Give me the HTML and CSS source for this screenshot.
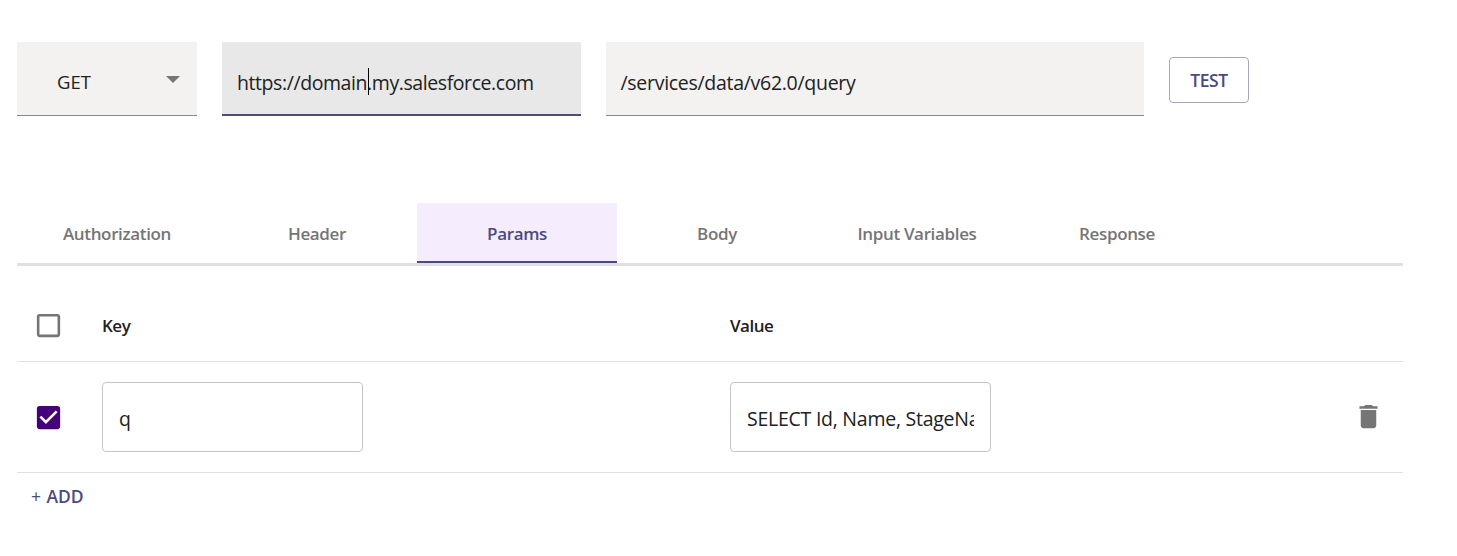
FILE: index.html
```html
<!DOCTYPE html>
<html lang="en">
<head>
<meta charset="utf-8">
<title>Request</title>
<link rel="stylesheet" href="styles.css">
</head>
<body>
<main class="page">
  <div class="request">
    <div class="field method"><span>GET</span><i class="arrow"></i></div>
    <div class="field host"><span>https://domain<i class="caret"></i>.my.salesforce.com</span></div>
    <div class="field path"><span>/services/data/v62.0/query</span></div>
    <button class="test"><span>TEST</span></button>
  </div>
  <nav class="tabs">
    <div class="tab"><span>Authorization</span></div>
    <div class="tab"><span>Header</span></div>
    <div class="tab active"><span>Params</span></div>
    <div class="tab"><span>Body</span></div>
    <div class="tab"><span>Input Variables</span></div>
    <div class="tab"><span>Response</span></div>
  </nav>
  <div class="row head">
    <svg class="check" viewBox="0 0 24 24"><path fill="#757575" d="M19 5v14H5V5h14m0-2H5c-1.100 0-2 .9-2 2v14c0 1.100.9 2 2 2h14c1.100 0 2-.9 2-2V5c0-1.100-.9-2-2-2z"/></svg>
    <div class="key"><span>Key</span></div>
    <div class="value"><span>Value</span></div>
  </div>
  <div class="row item">
    <svg class="check" viewBox="0 0 24 24"><path fill="#45007a" d="M19 3H5c-1.110 0-2 .9-2 2v14c0 1.100.89 2 2 2h14c1.110 0 2-.9 2-2V5c0-1.100-.89-2-2-2zm-9 14l-5-5 1.410-1.410L10 14.170l7.590-7.590L19 8l-9 9z"/></svg>
    <div class="key"><div class="box"><span>q</span></div></div>
    <div class="value"><div class="box"><span>SELECT Id, Name, StageName</span></div></div>
    <svg class="trash" viewBox="0 0 24 24"><path fill="#757575" d="M6 19c0 1.100.9 2 2 2h8c1.100 0 2-.9 2-2V7H6v12zM19 4h-3.500l-1-1h-5l-1 1H5v2h14V4z"/></svg>
  </div>
  <button class="add">+ <span>ADD</span></button>
</main>
</body>
</html>
```
FILE: styles.css
```css
* { box-sizing: border-box; }
body { margin: 0; background: #fff; color: #212121; font-family: "Open Sans", "Noto Sans", sans-serif; }
.page { width: 1403px; padding: 42px 0 0 17px; }
.request { display: flex; gap: 25px; height: 74px; }
.field { background: #f3f2f1; border-bottom: 1px solid #8a8a8a; padding: 8px 15px 0 14.5px; display: flex; align-items: center; font-size: 19.5px; letter-spacing: -0.29px; white-space: nowrap; }
.method { width: 180px; padding: 6px 17px 0 40px; justify-content: space-between; font-size: 18.5px; letter-spacing: 0; }
.arrow { border: 7px solid transparent; border-top-color: #757575; border-bottom: 0; margin-bottom: 5px; }
.host { width: 359px; padding: 8px 15px 0; background: #e8e8e8; border-bottom: 2px solid #4f4a80; letter-spacing: -0.42px; }
.caret { display: inline-block; width: 1px; height: 27px; margin: 0 -2px 0 1px; background: #000; vertical-align: -5px; }
.path { width: 538px; }
.test { width: 80px; height: 46px; margin-top: 15px; padding: 0; background: #fff; border: 1px solid #a9a6c0; border-radius: 4px; font: 600 17.5px "Open Sans", sans-serif; letter-spacing: -0.4px; color: #4b4a80; }
.tabs { display: flex; height: 63px; margin-top: 87px; border-bottom: 3px solid #e0e0e0; }
.tab { width: 200px; display: flex; align-items: center; justify-content: center; font-size: 17px; font-weight: 600; letter-spacing: -0.35px; color: #757575; }
.active { background: #f5ecfe; color: #4b4a80; border-bottom: 2px solid #4b4a80; padding-top: 2px; }
.row { display: grid; grid-template-columns: 85px 628px 1fr 50px; align-items: center; border-bottom: 1px solid #e0e0e0; }
.head { height: 96px; font-size: 17px; font-weight: 600; letter-spacing: -0.5px; padding-top: 24px; }
.item { height: 111px; }
.check { width: 31px; height: 31px; margin: 0 0 0 15.5px; }
.head .check { margin-bottom: 1px; position: relative; top: 0.5px; }
.trash { width: 31px; height: 31px; margin: 0 0 1px -0.5px; }
.box { width: 261px; height: 70px; border: 1px solid #c4c4c4; border-radius: 4px; padding: 3px 16px 0; display: flex; align-items: center; font-size: 19.5px; letter-spacing: -0.25px; overflow: hidden; white-space: nowrap; }
.box span { overflow: hidden; }
.add { margin: 11px 0 0 14px; padding: 0; border: 0; background: none; font: 400 17.5px "Open Sans", sans-serif; color: #4b4a80; }
.add span { font-weight: 600; letter-spacing: -0.1px; margin-left: 1px; }
```
